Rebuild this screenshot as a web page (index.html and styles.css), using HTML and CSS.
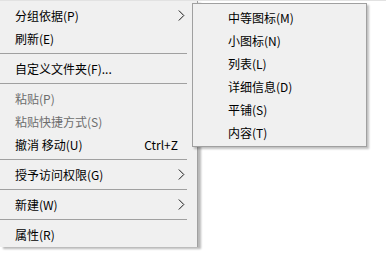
FILE: index.html
```html
<!DOCTYPE html>
<html lang="zh-CN">
<head>
    <meta charset="UTF-8">
    <title>右键菜单</title>
    <link rel="stylesheet" href="styles.css">
</head>
<body>
    <div class="desk">
        <ul class="menu">
            <li class="item">分组依据(P)<svg class="arrow" width="7" height="11" viewBox="0 0 7 11"><path d="M0.8 0.5 L5.8 5.5 L0.8 10.5" fill="none" stroke="#1a1a1a" stroke-width="1"/></svg></li>
            <li class="item">刷新(E)</li>
            <li class="sep"></li>
            <li class="item">自定义文件夹(F)...</li>
            <li class="sep"></li>
            <li class="item off">粘贴(P)</li>
            <li class="item off">粘贴快捷方式(S)</li>
            <li class="item">撤消 移动(U)<span class="key">Ctrl+Z</span></li>
            <li class="sep"></li>
            <li class="item">授予访问权限(G)<svg class="arrow" width="7" height="11" viewBox="0 0 7 11"><path d="M0.8 0.5 L5.8 5.5 L0.8 10.5" fill="none" stroke="#1a1a1a" stroke-width="1"/></svg></li>
            <li class="sep"></li>
            <li class="item">新建(W)<svg class="arrow" width="7" height="11" viewBox="0 0 7 11"><path d="M0.8 0.5 L5.8 5.5 L0.8 10.5" fill="none" stroke="#1a1a1a" stroke-width="1"/></svg></li>
            <li class="sep"></li>
            <li class="item">属性(R)</li>
        </ul>

        <!-- 查看 子菜单 -->
        <ul class="submenu">
            <li>中等图标(M)</li>
            <li>小图标(N)</li>
            <li>列表(L)</li>
            <li>详细信息(D)</li>
            <li>平铺(S)</li>
            <li>内容(T)</li>
        </ul>
    </div>
</body>
</html>
```

FILE: styles.css
```css
* {
    margin: 0;
    padding: 0;
    box-sizing: border-box;
}

body {
    background: #fff;
    font-family: "Noto Sans CJK SC", "Noto Sans", sans-serif;
    font-size: 12px;
    color: #000;
}

.desk {
    position: relative;
    height: 255px;
    border-top: 1px solid #e2e2e2;
}

/* main menu */
.menu {
    list-style: none;
    width: 198px;
    height: 246px;
    background: #f0f0f0;
    border-right: 1px solid #a0a0a0;
    padding-top: 3px;
    box-shadow: 3px 2px 2px rgba(0, 0, 0, 0.28);
}

.item {
    display: flex;
    align-items: center;
    justify-content: space-between;
    height: 23px;
    line-height: 23px;
    padding: 0 12px 0 15px;
}

.item.off {
    color: #6d6d6d;
}

.key {
    margin-right: 7px;
}

.arrow {
    display: block;
}

.sep {
    height: 1px;
    width: 187px;
    margin: 3px 0;
    background: #a0a0a0;
}

/* submenu */
.submenu {
    list-style: none;
    position: absolute;
    left: 192px;
    top: 2px;
    width: 175px;
    background: #f0f0f0;
    border: 1px solid #a0a0a0;
    padding: 2px 0;
    box-shadow: 2px 2px 2px rgba(0, 0, 0, 0.25);
}

.submenu li {
    height: 23px;
    line-height: 23px;
    padding-left: 35px;
}
```
